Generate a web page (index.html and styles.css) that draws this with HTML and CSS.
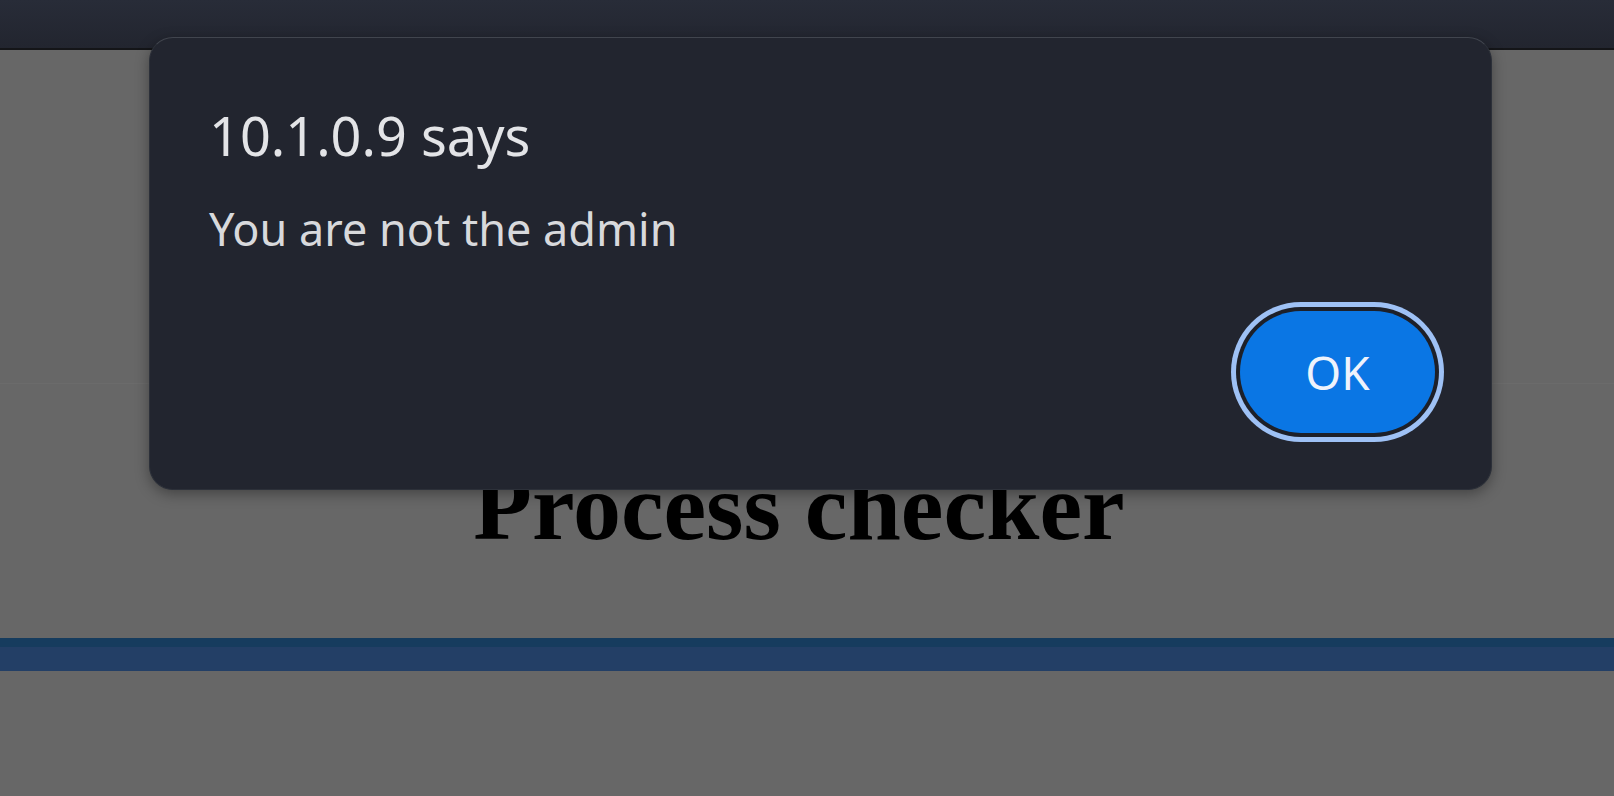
FILE: index.html
```html
<!DOCTYPE html>
<html>
<head>
<meta charset="utf-8">
<title>Process checker</title>
<link rel="stylesheet" href="styles.css">
</head>
<body>
<div class="topbar"></div>
<main class="page">
  <div class="rule"></div>
  <h1 class="heading">Process checker</h1>
  <div class="band"></div>
</main>
<div class="dialog" role="alertdialog">
  <div class="dialog-title">10.1.0.9 says</div>
  <div class="dialog-message">You are not the admin</div>
  <div class="dialog-actions">
    <button class="ok-button">OK</button>
  </div>
</div>
</body>
</html>
```

FILE: styles.css
```css
html, body {
  margin: 0;
  padding: 0;
  height: 100%;
  overflow: hidden;
}
body {
  background: #676767;
  font-family: "Noto Sans", "DejaVu Sans", sans-serif;
  position: relative;
}
.topbar {
  height: 48px;
  background: linear-gradient(#282c38, #22252f);
  border-bottom: 2px solid #141518;
}
.page {
  display: flex;
  flex-direction: column;
}
.rule {
  margin-top: 333px;
  height: 1px;
  background: #6b6b6b;
}
.heading {
  margin: 68px 0 0 0;
  font-family: "Liberation Serif", "Times New Roman", serif;
  font-weight: bold;
  font-size: 96px;
  line-height: 110px;
  color: #000;
  text-align: center;
  padding-right: 16px;
}
.band {
  margin-top: 76px;
  height: 24px;
  background: #233f66;
  border-top: 9px solid #163c5e;
}
.dialog {
  position: absolute;
  left: 149px;
  top: 37px;
  width: 1343px;
  height: 453px;
  box-sizing: border-box;
  background: #22252f;
  border: 1px solid #2c3039;
  border-top-color: #41454e;
  border-radius: 24px;
  box-shadow: 0 4px 14px rgba(0, 0, 0, 0.35);
  padding: 60px 56px 56px 59px;
  display: flex;
  flex-direction: column;
}
.dialog-title {
  font-size: 54px;
  line-height: 74px;
  color: #e3e4e7;
}
.dialog-message {
  margin-top: 26px;
  font-size: 45px;
  line-height: 61px;
  color: #d8d9dc;
}
.dialog-actions {
  margin-top: auto;
  display: flex;
  justify-content: flex-end;
}
.ok-button {
  width: 195px;
  height: 122px;
  border: none;
  border-radius: 61px;
  background: #0a76e4;
  color: #eef3fc;
  font-family: "Noto Sans", "DejaVu Sans", sans-serif;
  font-size: 46px;
  padding: 0;
  box-shadow: 0 0 0 4px #1d2029, 0 0 0 9px #9ec1f5;
}
```
